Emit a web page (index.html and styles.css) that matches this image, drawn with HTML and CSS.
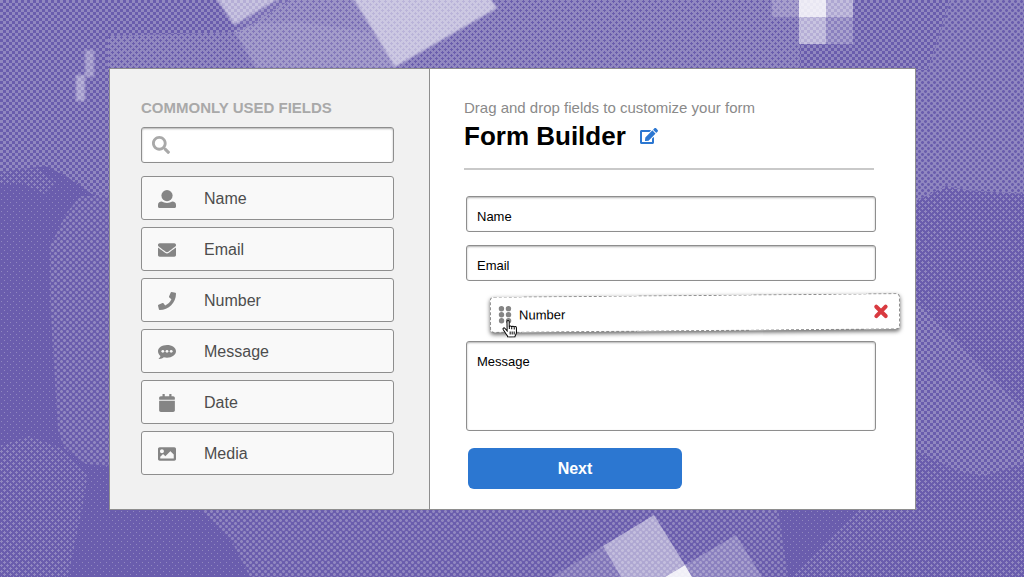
FILE: index.html
```html
<!DOCTYPE html>

<html lang="en">

    <head>
        <meta charset="UTF-8">
        <meta name="viewport" content="width=device-width, initial-scale=1.0">
        <title>Form Builder</title>
        <link rel="stylesheet" href="styles.css">
    </head>

    <body>
        <!-- halftone backdrop -->
        <svg class="backdrop" viewBox="0 0 1024 577" preserveAspectRatio="xMidYMid slice" aria-hidden="true">
            <defs>
                <pattern id="dots" width="6" height="6" patternUnits="userSpaceOnUse">
                    <rect class="dark" width="6" height="6"/>
                    <path class="light" d="M1 1h1v1h-1zM4 4h1v1h-1z"/>
                </pattern>
                <pattern id="plus" width="6" height="6" patternUnits="userSpaceOnUse">
                    <rect class="dark" width="6" height="6"/>
                    <path class="light" d="M1 0h1v3h-1zM0 1h1v1h-1zM2 1h1v1h-1zM4 3h1v3h-1zM3 4h1v1h-1zM5 4h1v1h-1z"/>
                </pattern>
                <pattern id="blob" width="6" height="6" patternUnits="userSpaceOnUse">
                    <rect class="dark" width="6" height="6"/>
                    <path class="light" fill-opacity=".5" d="M0 0h3v3h-3zM3 3h3v3h-3z"/>
                    <path class="light" d="M1 0h1v3h-1zM0 1h1v1h-1zM2 1h1v1h-1zM4 3h1v3h-1zM3 4h1v1h-1zM5 4h1v1h-1z"/>
                </pattern>
                <pattern id="checker" width="6" height="6" patternUnits="userSpaceOnUse">
                    <rect class="dark" width="6" height="6"/>
                    <path class="light" d="M0 0h3v3h-3zM3 3h3v3h-3z"/>
                </pattern>
                <pattern id="blobLight" width="6" height="6" patternUnits="userSpaceOnUse">
                    <rect class="light" width="6" height="6"/>
                    <path class="dark" fill-opacity=".5" d="M0 0h3v3h-3zM3 3h3v3h-3z"/>
                    <path class="dark" d="M1 0h1v3h-1zM0 1h1v1h-1zM2 1h1v1h-1zM4 3h1v3h-1zM3 4h1v1h-1zM5 4h1v1h-1z"/>
                </pattern>
                <pattern id="plusLight" width="6" height="6" patternUnits="userSpaceOnUse">
                    <rect class="light" width="6" height="6"/>
                    <path class="dark" d="M1 0h1v3h-1zM0 1h1v1h-1zM2 1h1v1h-1zM4 3h1v3h-1zM3 4h1v1h-1zM5 4h1v1h-1z"/>
                </pattern>
            </defs>
            <rect width="1024" height="577" fill="url(#checker)"/>
            <path fill="url(#plusLight)" d="M108 36L240 32L290 0H800V70H108z"/>
            <path fill="url(#blobLight)" d="M928 70L950 0H1024V194L966 190L946 186L914 202V70z"/>
            <path fill="url(#dots)" d="M0 172L46 166L66 176L92 194L110 204V509H260V577H0z"/>
            <path fill="url(#plus)" d="M0 172L38 168L56 182L44 194L24 184L0 184z"/>
            <path fill="url(#blob)" d="M110 196H80L66 214L50 246L50 300L58 430L64 448L86 464L110 466z"/>
            <path fill="url(#plus)" d="M0 446L30 436L60 448L88 474L82 510L68 577H0z"/>
            <path fill="url(#blob)" d="M200 509H778L788 577H250L232 542z"/>
            <path fill="url(#plus)" d="M914 202L946 188L966 191L1024 194V410L984 370L954 338L914 300z"/>
            <path fill="url(#plus)" d="M946 326L930 290H1024V410L990 366z"/>
            <path fill="url(#dots)" d="M778 509H914V450L960 472L985 476L1024 464V577H788z"/>
            <path fill="url(#plus)" d="M914 450L960 472L985 476L1024 464V577H790L860 509H914z"/>

            <g class="soft">
                <path fill-opacity=".5" d="M216 -2H280L234 25z"/>
                <path fill-opacity=".1" d="M280 -2H354L372 32L300 24L234 25z"/>
                <path fill-opacity=".17" d="M234 30L256 24L300 23L372 32L396 68H256z"/>
                <path fill-opacity=".54" d="M353 -2H490L497 8L395 67z"/>
                <rect fill-opacity=".3" x="85" y="50" width="9" height="27"/>
                <rect fill-opacity=".36" x="76" y="75" width="9" height="26"/>
            </g>
            <g fill="white">
                <rect fill-opacity=".2" x="772" y="0" width="27" height="17"/>
                <rect fill-opacity=".85" x="799" y="0" width="27" height="17"/>
                <rect fill-opacity=".46" x="826" y="0" width="27" height="17"/>
                <rect fill-opacity=".5" x="799" y="17" width="27" height="27"/>
                <rect fill-opacity=".22" x="826" y="17" width="27" height="27"/>
                <path fill-opacity=".46" d="M603 546L654 515L685 565L665 577H621z"/>
                <path fill-opacity=".9" d="M665 577L685 565L692 577z"/>
                <path fill-opacity=".22" d="M685 565L736 535L762 577H692z"/>
                <path fill-opacity=".15" d="M552 577L603 546L621 577z"/>
            </g>
        </svg>

        <main class="builder">
            <aside class="sidebar">
                <h2 class="sidebarTitle">COMMONLY USED FIELDS</h2>
                <div class="search">
                    <svg class="searchIcon" viewBox="0 0 512 512" aria-hidden="true"><path d="M505 442.7L405.3 343c-4.5-4.5-10.6-7-17-7H372c27.6-35.3 44-79.7 44-128C416 93.1 322.9 0 208 0S0 93.1 0 208s93.1 208 208 208c48.3 0 92.7-16.4 128-44v16.3c0 6.4 2.5 12.5 7 17l99.7 99.7c9.4 9.4 24.6 9.4 33.9 0l28.3-28.3c9.4-9.4 9.4-24.6.1-34zM208 336c-70.7 0-128-57.2-128-128 0-70.7 57.2-128 128-128 70.7 0 128 57.2 128 128 0 70.7-57.2 128-128 128z"/></svg>
                    <input type="search" class="searchInput" aria-label="Search fields">
                </div>
                <div class="fieldList">
                    <button type="button" class="fieldButton">
                        <svg viewBox="0 0 18 18" aria-hidden="true"><circle cx="9" cy="5.600" r="5.600"/><path d="M3.800 11.500C5.200 12.400 7 12.900 9 12.900s3.800-.5 5.200-1.400C16.700 11.500 18 13 18 15v1.500c0 .9-.6 1.500-1.500 1.500h-15C.6 18 0 17.400 0 16.500V15c0-2 1.300-3.500 3.800-3.500z"/></svg>
                        Name
                    </button>
                    <button type="button" class="fieldButton">
                        <svg viewBox="0 0 512 512" aria-hidden="true"><path d="M502.3 190.800c3.900-3.100 9.700-.2 9.700 4.700V400c0 26.500-21.500 48-48 48H48c-26.500 0-48-21.500-48-48V195.600c0-5 5.700-7.800 9.700-4.700 22.400 17.400 52.100 39.500 154.100 113.600 21.100 15.400 56.700 47.800 92.200 47.600 35.700.3 72-32.800 92.300-47.600 102-74.100 131.600-96.300 154-113.700zM256 320c23.200.4 56.600-29.200 73.400-41.400 132.700-96.300 142.800-104.700 173.400-128.700 5.800-4.500 9.200-11.500 9.200-18.900v-19c0-26.500-21.500-48-48-48H48c-26.500 0-48 21.500-48 48v19c0 7.400 3.400 14.300 9.200 18.900 30.600 23.900 40.700 32.400 173.400 128.700 16.800 12.200 50.200 41.800 73.400 41.400z"/></svg>
                        Email
                    </button>
                    <button type="button" class="fieldButton">
                        <svg viewBox="0 0 512 512" aria-hidden="true"><path d="M493.400 24.600l-104-24c-11.300-2.600-22.900 3.300-27.500 13.900l-48 112c-4.200 9.800-1.400 21.300 6.900 28l60.600 49.600c-36 76.700-98.900 140.500-177.200 177.200l-49.600-60.600c-6.800-8.300-18.200-11.100-28-6.900l-112 48C3.900 366.500-2 378.100.6 389.400l24 104C27.100 504.200 36.700 512 48 512c256.100 0 464-207.500 464-464 0-11.200-7.700-20.900-18.600-23.400z"/></svg>
                        Number
                    </button>
                    <button type="button" class="fieldButton">
                        <svg viewBox="0 0 18 18" aria-hidden="true"><path d="M9 2C4 2 0 4.800 0 8.300c0 1.900.9 3.500 2.400 4.700C2.200 14.300 1.500 15.100.3 15.800c2 .3 4-.2 5.500-1.500 1 .3 2.100.4 3.200.4 5 0 9-2.800 9-6.400S14 2 9 2z"/><g class="cutout"><circle cx="4.800" cy="8.300" r="1.400"/><circle cx="9" cy="8.300" r="1.400"/><circle cx="13.200" cy="8.300" r="1.400"/></g></svg>
                        Message
                    </button>
                    <button type="button" class="fieldButton">
                        <svg viewBox="-32 0 512 512" aria-hidden="true"><path d="M12 192h424c6.600 0 12 5.400 12 12v260c0 26.500-21.500 48-48 48H48c-26.500 0-48-21.500-48-48V204c0-6.600 5.400-12 12-12zm436-44v-36c0-26.500-21.500-48-48-48h-48V12c0-6.600-5.400-12-12-12h-40c-6.600 0-12 5.400-12 12v52H160V12c0-6.600-5.400-12-12-12h-40c-6.600 0-12 5.400-12 12v52H48C21.500 64 0 85.500 0 112v36c0 6.600 5.400 12 12 12h424c6.600 0 12-5.400 12-12z"/></svg>
                        Date
                    </button>
                    <button type="button" class="fieldButton">
                        <svg viewBox="0 0 512 512" aria-hidden="true"><path fill-rule="evenodd" d="M464 448H48c-26.500 0-48-21.500-48-48V112c0-26.500 21.500-48 48-48h416c26.500 0 48 21.500 48 48v288c0 26.500-21.500 48-48 48zM112 120c-30.900 0-56 25.100-56 56s25.100 56 56 56 56-25.100 56-56-25.100-56-56-56zM64 384h384V272l-87.500-87.500c-4.700-4.700-12.300-4.700-17 0L208 320l-55.500-55.500c-4.700-4.700-12.300-4.700-17 0L64 336v48z"/></svg>
                        Media
                    </button>
                </div>
            </aside>

            <section class="content">
                <header class="formHeader">
                    <p class="hint">Drag and drop fields to customize your form</p>
                    <div class="titleRow">
                        <h1>Form Builder</h1>
                        <button type="button" class="iconButton" aria-label="Edit title">
                            <svg class="editIcon" viewBox="0 0 576 512" aria-hidden="true"><path d="M402.600 83.200l90.200 90.200c3.800 3.800 3.800 10 0 13.800L274.400 405.600l-92.800 10.300c-12.400 1.400-22.900-9.100-21.500-21.500l10.300-92.800L388.800 83.200c3.800-3.800 10-3.800 13.800 0zm162-22.900l-48.800-48.800c-15.200-15.200-39.900-15.200-55.200 0l-35.400 35.400c-3.800 3.800-3.800 10 0 13.800l90.200 90.200c3.800 3.800 10 3.800 13.800 0l35.400-35.400c15.200-15.300 15.200-40 0-55.200zM384 346.200V448H64V128h229.800c3.200 0 6.200-1.300 8.500-3.500l40-40c7.600-7.600 2.200-20.500-8.500-20.500H48C21.500 64 0 85.500 0 112v352c0 26.500 21.500 48 48 48h352c26.500 0 48-21.500 48-48V306.200c0-10.700-12.900-16-20.500-8.500l-40 40c-2.200 2.300-3.500 5.300-3.500 8.500z"/></svg>
                        </button>
                    </div>
                </header>

                <form class="formFields">
                    <input type="text" class="formInput" value="Name" aria-label="Name">
                    <input type="text" class="formInput" value="Email" aria-label="Email">
                    <div class="dragging">
                        <svg class="grip" viewBox="0 0 14 20" aria-hidden="true"><circle cx="3.500" cy="4" r="2.700"/><circle cx="10.500" cy="4" r="2.700"/><circle cx="3.500" cy="10" r="2.700"/><circle cx="10.500" cy="10" r="2.700"/><circle cx="3.500" cy="16" r="2.700"/><circle cx="10.500" cy="16" r="2.700"/></svg>
                        <input type="text" class="dragInput" value="Number" aria-label="Number">
                        <button type="button" class="iconButton" aria-label="Remove field">
                            <svg class="removeIcon" viewBox="0 0 16 16" aria-hidden="true"><path d="M3.300 3.300l9.400 9.400M12.700 3.300l-9.400 9.400"/></svg>
                        </button>
                        <svg class="hand" viewBox="0 0 16 18" aria-hidden="true"><path d="M5 11.200L2.700 8.600C1.800 7.700.4 8.700 1 9.800l3.200 5c.6.900 1.300 1.200 1.300 2.600h7.200c0-1.600 1.600-2.600 1.600-4.800V8.100c0-1.400-2-1.500-2.200-.2 0-1.600-2.300-1.700-2.500-.3 0-1.600-2.300-1.600-2.500-.2V2.100C7 .3 4.900.3 4.900 2.100z"/><path d="M7.200 7.400v2M9.600 7.600v2M12.100 8v2M8 12v3M10 12v3M12 12v3"/></svg>
                    </div>
                    <textarea class="formInput message" aria-label="Message">Message</textarea>
                    <button type="submit" class="nextButton">Next</button>
                </form>
            </section>
        </main>
    </body>

</html>
```
FILE: styles.css
```css
* {
    box-sizing: border-box;
}

body {
    margin: 0;
    min-height: 100vh;
    padding: 68px 108px 67px 109px;
    display: flex;
    align-items: flex-start;
    background-color: #6a5dad;
    font-family: "Liberation Sans", Arial, sans-serif;
}

h1, h2, p {
    margin: 0;
}

button, input, textarea {
    font-family: inherit;
}

.backdrop {
    position: fixed;
    z-index: -1;
    top: 0;
    left: 0;
    width: 100%;
    height: 100%;
}

.backdrop pattern {
    shape-rendering: crispEdges;
}

.dark {
    fill: #6a5dad;
}

.light {
    fill: #9188c0;
}

.soft {
    fill: white;
    filter: blur(1px);
}

/* card */
.builder {
    flex: 1;
    display: flex;
    border: 1px solid #8e8e8e;
    background-color: white;
}

.sidebar {
    flex: 0 0 320px;
    padding: 30px 35px 30px 31px;
    border-right: 1px solid #8e8e8e;
    background-color: #f1f1f1;
}

.sidebarTitle {
    color: #a9a9a9;
    font-size: 15px;
    line-height: 18px;
    white-space: nowrap;
}

.search {
    display: flex;
    align-items: center;
    height: 36px;
    margin-top: 10px;
    padding: 0 10px;
    border: 1px solid #8e8e8e;
    border-radius: 3px;
    background-color: white;
    box-shadow: inset 0 1px 2px rgba(0, 0, 0, 0.3);
}

.searchIcon {
    width: 18px;
    height: 18px;
    fill: #a9a9a9;
}

.searchInput {
    flex: 1;
    min-width: 0;
    border: none;
    outline: none;
    background: none;
    font-size: 16px;
}

.fieldList {
    display: flex;
    flex-direction: column;
    gap: 7px;
    margin-top: 13px;
}

.fieldButton {
    display: flex;
    align-items: center;
    gap: 28px;
    height: 44px;
    padding: 2px 16px 0;
    border: 1px solid #8e8e8e;
    border-radius: 3px;
    background-color: #f9f9f9;
    color: #4d4d4d;
    font-size: 16px;
    cursor: pointer;
}

.fieldButton svg {
    width: 18px;
    height: 18px;
    fill: #858585;
}

.fieldButton .cutout {
    fill: #f9f9f9;
}

/* form */
.content {
    flex: 1;
    padding: 30px 39px 20px 34px;
}

.formHeader {
    margin-right: 2px;
    padding-bottom: 17px;
    border-bottom: 2px solid #c9c9c9;
}

.hint {
    color: #8a8a8a;
    font-size: 15px;
    line-height: 18px;
}

.titleRow {
    display: flex;
    align-items: center;
    gap: 14px;
    margin-top: 4px;
}

h1 {
    font-size: 26px;
    line-height: 30px;
}

.iconButton {
    display: flex;
    padding: 0;
    border: none;
    background: none;
    cursor: pointer;
}

.editIcon {
    width: 18px;
    height: 16px;
    fill: #2c77d1;
}

.formFields {
    display: flex;
    flex-direction: column;
    margin: 26px 0 0 2px;
}

.formInput {
    width: 100%;
    height: 36px;
    margin: 0 0 13px;
    padding: 4px 10px 0;
    border: 1px solid #8e8e8e;
    border-radius: 3px;
    background-color: white;
    box-shadow: inset 0 1px 2px rgba(0, 0, 0, 0.3);
    color: black;
    font-size: 13px;
}

.message {
    height: 90px;
    margin-bottom: 17px;
    padding-top: 12px;
    resize: none;
}

/* field being dragged, pulled out to the right of the column */
.dragging {
    position: relative;
    display: flex;
    align-items: center;
    height: 36px;
    margin: 1px -24px 10px 24px;
    padding: 0 10px 0 7px;
    border: 1px dashed #8e8e8e;
    border-radius: 4px;
    background-color: white;
    box-shadow: 0 2px 4px rgba(0, 0, 0, 0.6);
    transform: rotate(-0.5deg);
}

.grip {
    width: 14px;
    height: 20px;
    fill: #858585;
}

.dragInput {
    flex: 1;
    min-width: 0;
    padding: 0 7px;
    border: none;
    outline: none;
    background: none;
    color: black;
    font-size: 13px;
}

.removeIcon {
    width: 16px;
    height: 16px;
    fill: none;
    stroke: #d93a40;
    stroke-width: 4;
    stroke-linecap: round;
}

.hand {
    position: absolute;
    left: 11px;
    top: 22px;
    width: 16px;
    height: 18px;
    fill: white;
    stroke: black;
    stroke-width: 1;
}

.nextButton {
    align-self: flex-start;
    width: 214px;
    height: 41px;
    margin-left: 2px;
    border: none;
    border-radius: 6px;
    background-color: #2c77d1;
    color: white;
    font-size: 16px;
    font-weight: bold;
    cursor: pointer;
}
```
